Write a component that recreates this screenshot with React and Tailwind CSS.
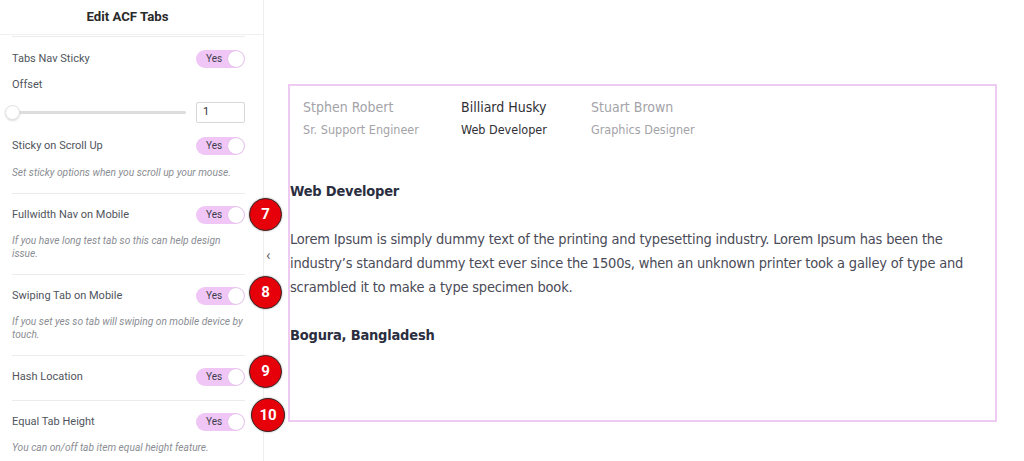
import React from 'react';

const Toggle = () => (
  <div className="flex h-[18px] w-[49px] items-center justify-between rounded-full bg-[#efc6f6] pl-[10px] pr-[1px]">
    <span className="text-[10px] leading-none text-[#3d3d4a]">Yes</span>
    <span className="h-[16px] w-[16px] rounded-full bg-white shadow-[0_0_1px_rgba(0,0,0,0.2)]" />
  </div>
);

const Badge = ({ n, className }) => (
  <div
    className={`absolute flex items-center justify-center rounded-full border-[1.5px] border-[#3b2222] bg-[#e5000a] font-['Roboto',sans-serif] text-[15px] font-bold text-white shadow-[0_0_2px_rgba(0,0,0,0.4)] ${className}`}
  >
    {n}
  </div>
);

const Row = ({ label, badge }) => (
  <div className="relative flex h-[18px] items-center justify-between">
    <span className="text-[11px] text-[#50555c]">{label}</span>
    <Toggle />
    {badge}
  </div>
);

const Desc = ({ children, className = '' }) => (
  <p className={`text-[10.2px] italic leading-[13px] text-[#8a8d93] ${className}`}>{children}</p>
);

const Section = ({ children, className = '' }) => (
  <div className={`border-t border-[#ececec] pt-3 pb-[14px] ${className}`}>{children}</div>
);

const tabs = [
  { name: 'Stphen Robert', role: 'Sr. Support Engineer', w: 'w-[158px]' },
  { name: 'Billiard Husky', role: 'Web Developer', w: 'w-[130px]', active: true },
  { name: 'Stuart Brown', role: 'Graphics Designer', w: 'w-[130px]' }
];

export default function App() {
  return (
    <div className="flex h-[461px] w-[1024px] overflow-hidden bg-white">
      {/* settings panel */}
      <aside className="relative h-full w-[264px] shrink-0 border-r border-[#eeeeee] font-['Roboto',sans-serif]">
        <div className="flex h-[35px] items-center justify-center border-b border-[#f0f0f0] pr-2">
          <h1 className="text-[13.2px] font-bold text-[#2a2a2a]">Edit ACF Tabs</h1>
        </div>
        <div className="mt-[1px] ml-3 mr-[18px]">
          <Section className="pt-[13px]">
            <Row label="Tabs Nav Sticky" />
            <p className="mt-[10px] text-[11px] leading-[14px] text-[#50555c]">Offset</p>
            <div className="mt-[10px] flex items-center justify-between">
              <div className="relative -ml-[6px] flex h-[21px] w-[180px] items-center">
                <div className="h-[3px] w-full rounded-full bg-[#dddddd]" />
                <div className="absolute left-[-1px] h-[15px] w-[15px] rounded-full border border-[#e2e2e2] bg-white shadow-[0_1px_2px_rgba(0,0,0,0.15)]" />
              </div>
              <div className="flex h-[21px] w-[49px] items-center rounded-[2px] border border-[#d8d8d8] pl-[6px] text-[11px] text-[#333]">1</div>
            </div>
            <div className="mt-[14px]">
              <Row label="Sticky on Scroll Up" />
            </div>
            <Desc className="mt-[11px]">Set sticky options when you scroll up your mouse.</Desc>
          </Section>
          <Section>
            <Row
              label="Fullwidth Nav on Mobile"
              badge={<Badge n="7" className="left-[237px] top-[-8px] h-[33px] w-[33px]" />}
            />
            <Desc className="mt-[10px]">If you have long test tab so this can help design issue.</Desc>
          </Section>
          <Section>
            <Row
              label="Swiping Tab on Mobile"
              badge={<Badge n="8" className="left-[237px] top-[-11px] h-[33px] w-[33px]" />}
            />
            <Desc className="mt-[10px]">If you set yes so tab will swiping on mobile device by touch.</Desc>
          </Section>
          <Section>
            <Row
              label="Hash Location"
              badge={<Badge n="9" className="left-[237px] top-[-13px] h-[33px] w-[33px]" />}
            />
          </Section>
          <Section>
            <Row
              label="Equal Tab Height"
              badge={<Badge n="10" className="left-[239px] top-[-15px] h-[34px] w-[34px]" />}
            />
            <Desc className="mt-[10px]">You can on/off tab item equal height feature.</Desc>
          </Section>
        </div>
        <span className="absolute left-[266px] top-[248px] text-[15px] leading-none text-[#666]">‹</span>
      </aside>

      {/* preview */}
      <main className="flex-1 pl-[24px] pt-[84px] font-['DejaVu_Sans_Condensed','DejaVu_Sans',sans-serif]">
        <div className="h-[338px] w-[709px] border-2 border-[#efcbf4]">
          <div className="flex pl-[13px] pt-[12px]">
            {tabs.map((t) => (
              <div key={t.name} className={t.w}>
                <p className={`text-[14px] leading-[18px] ${t.active ? 'text-[#2f2f36]' : 'text-[#a3a3a8]'}`}>{t.name}</p>
                <p className={`mt-[6px] text-[12.5px] leading-[16px] ${t.active ? 'text-[#2f2f36]' : 'text-[#a3a3a8]'}`}>{t.role}</p>
              </div>
            ))}
          </div>
          <div className="mt-[41px] pr-[12px] text-[14.5px] tracking-[-0.2px] text-[#4a4b57]">
            <h2 className="font-bold leading-[24px] text-[#2b2e3f]">Web Developer</h2>
            <p className="mt-[24px] leading-[24px]">
              Lorem Ipsum is simply dummy text of the printing and typesetting industry. Lorem Ipsum has been the industry’s standard dummy text ever since the 1500s, when an unknown printer took a galley of type and scrambled it to make a type specimen book.
            </p>
            <h2 className="mt-[24px] font-bold leading-[24px] text-[#2b2e3f]">Bogura, Bangladesh</h2>
          </div>
        </div>
      </main>
    </div>
  );
}
